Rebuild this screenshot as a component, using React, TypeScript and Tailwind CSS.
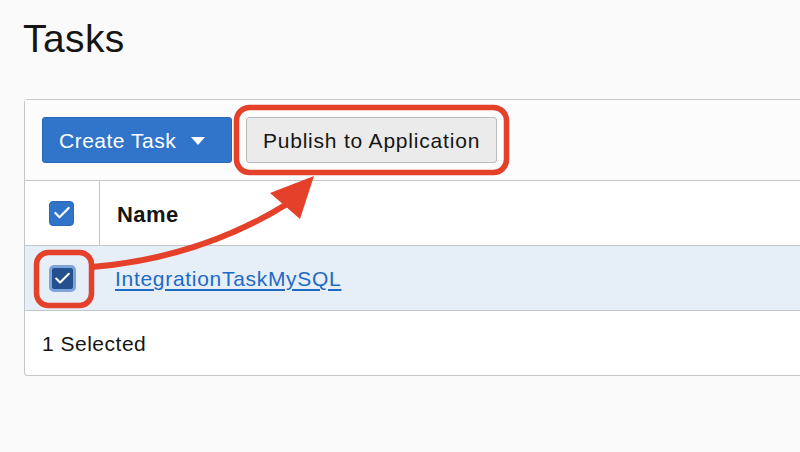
import { Check } from 'lucide-react';

function CheckBox({ dark }: { dark?: boolean }) {
  if (dark) {
    return (
      <span className="flex h-[27px] w-[27px] items-center justify-center rounded-[5px] border-[3px] border-[#7fa4db] bg-[#24508f]">
        <Check size={19} strokeWidth={2.6} className="text-white" />
      </span>
    );
  }
  return (
    <span className="flex h-[25px] w-[25px] items-center justify-center rounded-[4px] border border-[#2a68b8] bg-[#2f74c9]">
      <Check size={20} strokeWidth={2.6} className="text-white" />
    </span>
  );
}

export default function App() {
  return (
    <div
      className="relative h-[452px] w-[800px] overflow-hidden bg-[#fafafa] text-[#161513]"
      style={{ fontFamily: '"Liberation Sans", Arial, sans-serif' }}
    >
      <h1 className="pl-[23px] pt-[20px] text-[39px] leading-[38px] font-normal tracking-[0.4px]">Tasks</h1>

      {/* Table panel */}
      <div className="ml-[24px] mt-[41px] w-[800px] rounded-tl-[4px] rounded-bl-[4px] border-y border-l border-[#c4c6ca] bg-white">
        <div className="flex h-[81px] items-center gap-[14px] border-b border-[#c4c6ca] bg-[#fcfcfc] pl-[17px]">
          <button className="flex h-[46px] w-[190px] items-center rounded-[3px] border border-[#2a67b6] bg-[#3075ca] pl-[16px] pt-[2px] text-[21px] tracking-[0.5px] text-white">
            Create Task
            <svg width="14" height="8" viewBox="0 0 14 8" className="ml-[15px]">
              <path d="M0 0h14L7 8z" fill="#fff" />
            </svg>
          </button>
          <button className="flex h-[46px] w-[251px] items-center justify-center rounded-[3px] border border-[#b9bbbe] bg-[#ebebeb] pt-[2px] text-[21px] tracking-[0.8px] text-[#161513]">
            Publish to Application
          </button>
        </div>

        <div className="flex h-[65px] border-b border-[#c4c6ca] bg-white">
          <div className="flex w-[75px] items-center justify-center border-r border-[#c4c6ca] pr-[1px]">
            <CheckBox />
          </div>
          <div className="flex items-center pl-[17px] pt-[2px] text-[22px] font-bold tracking-[0.4px]">Name</div>
        </div>

        <div className="flex h-[65px] border-b border-[#c4c6ca] bg-[#e6eef8]">
          <div className="flex w-[75px] items-center justify-center pr-[1px]">
            <CheckBox dark />
          </div>
          <div className="flex items-center pl-[15px] pt-[2px]">
            <a href="#" className="text-[21px] tracking-[0.7px] text-[#1f6ac4] underline underline-offset-[3px]">
              IntegrationTaskMySQL
            </a>
          </div>
        </div>

        <div className="flex h-[64px] items-center pl-[17px] pt-[2px] text-[21px] tracking-[0.5px]">1 Selected</div>
      </div>

      {/* Annotations */}
      <svg className="pointer-events-none absolute left-0 top-0" width="800" height="452">
        <rect x="236.5" y="107.5" width="270" height="65" rx="13" fill="none" stroke="#e4402a" strokeWidth="5.5" />
        <rect x="36.5" y="252.5" width="55" height="53" rx="12" fill="none" stroke="#e4402a" strokeWidth="5.5" />
        <path d="M92 267 Q200 258 287 204" fill="none" stroke="#e4402a" strokeWidth="6" />
        <polygon points="314,176 270,193 300,219" fill="#e4402a" />
      </svg>
    </div>
  );
}
